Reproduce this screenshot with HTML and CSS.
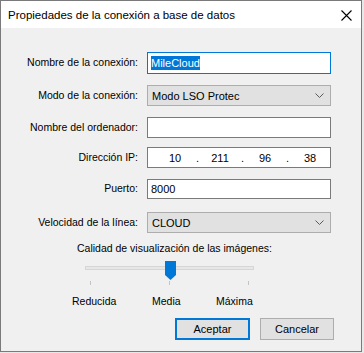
FILE: index.html
```html
<!DOCTYPE html>
<html lang="es">
<head>
    <meta charset="UTF-8">
    <meta name="viewport" content="width=device-width, initial-scale=1.0">
    <title>Propiedades de la conexión</title>
    <link rel="stylesheet" href="styles.css">
</head>
<body>
    <div class="dialog">
        <div class="titlebar">
            <span class="title">Propiedades de la conexión a base de datos</span>
            <svg class="close" width="11" height="11" viewBox="0 0 11 11">
                <path d="M0.5 0.5 L10.5 10.5 M10.5 0.5 L0.5 10.5" stroke="#000" stroke-width="1.1" fill="none"/>
            </svg>
        </div>

        <div class="content">
            <div class="form">
                <div class="row">
                    <label>Nombre de la conexión:</label>
                    <div class="field input focused"><span class="selected">MileCloud</span></div>
                </div>
                <div class="row">
                    <label>Modo de la conexión:</label>
                    <div class="field select">
                        <span>Modo LSO Protec</span>
                        <svg class="chevron" width="9" height="5" viewBox="0 0 9 5">
                            <path d="M0.5 0.5 L4.5 4.5 L8.5 0.5" stroke="#5a5a5a" fill="none"/>
                        </svg>
                    </div>
                </div>
                <div class="row">
                    <label>Nombre del ordenador:</label>
                    <div class="field input"></div>
                </div>
                <div class="row row-ip">
                    <label>Dirección IP:</label>
                    <div class="field input ip">
                        <span class="octet">10</span><span class="dot">.</span>
                        <span class="octet">211</span><span class="dot">.</span>
                        <span class="octet">96</span><span class="dot">.</span>
                        <span class="octet">38</span>
                    </div>
                </div>
                <div class="row row-port">
                    <label>Puerto:</label>
                    <div class="field input">8000</div>
                </div>
                <div class="row row-speed">
                    <label>Velocidad de la línea:</label>
                    <div class="field select">
                        <span>CLOUD</span>
                        <svg class="chevron" width="9" height="5" viewBox="0 0 9 5">
                            <path d="M0.5 0.5 L4.5 4.5 L8.5 0.5" stroke="#5a5a5a" fill="none"/>
                        </svg>
                    </div>
                </div>
            </div>

            <div class="quality-label">Calidad de visualización de las imágenes:</div>

            <div class="slider">
                <div class="track">
                    <svg class="thumb" width="11" height="19" viewBox="0 0 11 19">
                        <path d="M0 0 H11 V14 L5.5 19 L0 14 Z" fill="#0078d7"/>
                    </svg>
                </div>
                <div class="ticks">
                    <span class="tick"></span>
                    <span class="tick"></span>
                    <span class="tick"></span>
                </div>
            </div>

            <div class="slider-labels">
                <span>Reducida</span>
                <span>Media</span>
                <span>Máxima</span>
            </div>

            <div class="buttons">
                <a href="#" class="btn default">Aceptar</a>
                <a href="#" class="btn">Cancelar</a>
            </div>
        </div>
    </div>
</body>
</html>
```

FILE: styles.css
```css
* {
    box-sizing: border-box;
}

body {
    margin: 0;
    background-color: #e8e8e8;
    font-family: "Liberation Sans", Arial, sans-serif;
    font-size: 10.5px;
    color: black;
}

.dialog {
    width: 362px;
    height: 352px;
    border: 1px solid #7a7a7a;
    background-color: #f0f0f0;
    display: flex;
    flex-direction: column;
}

.titlebar {
    height: 27px;
    background-color: white;
    display: flex;
    align-items: center;
    justify-content: space-between;
    padding: 0 9px 0 7px;
}

.title {
    font-family: "Liberation Sans", Arial, sans-serif;
    font-size: 11.5px;
}

.close {
    margin-top: 1px;
}

.content {
    flex: 1;
    padding-top: 24px;
}

.form {
    display: flex;
    flex-direction: column;
    gap: 11px;
}

.row {
    display: flex;
    align-items: center;
    gap: 9px;
}

.row label {
    width: 137px;
    text-align: right;
    margin-bottom: 2px;
}

.row-ip {
    margin-top: -2px;
}

.row-speed {
    margin-top: 2px;
}

.field {
    width: 184px;
    height: 21px;
    display: flex;
    align-items: center;
    padding: 0 3px;
    font-size: 11px;
}

.input {
    background-color: white;
    border: 1px solid #7a7a7a;
}

.input.focused {
    height: 22px;
    border-color: #0078d7;
}

.row-port .field {
    height: 20px;
}

.selected {
    background-color: #0078d7;
    color: white;
    padding: 1px 0;
}

.select {
    background-color: #e1e1e1;
    border: 1px solid #adadad;
    justify-content: space-between;
    padding: 0 6px 0 4px;
}

.ip {
    padding-left: 12px;
}

.octet {
    width: 30px;
    text-align: center;
}

.dot {
    width: 15px;
    text-align: center;
}

.quality-label {
    margin-top: 9px;
    padding-left: 76px;
}

.slider {
    margin: 12px 0 0 84px;
    width: 169px;
}

.track {
    position: relative;
    height: 4px;
    background-color: #e7e7e7;
    border: 1px solid #d6d6d6;
}

.thumb {
    position: absolute;
    left: 79px;
    top: -6px;
}

.ticks {
    display: flex;
    justify-content: space-between;
    width: 159px;
    margin: 11px 0 0 5px;
}

.tick {
    width: 1px;
    height: 4px;
    background-color: #c4c4c4;
}

.slider-labels {
    display: grid;
    grid-template-columns: 80px 64px auto;
    margin-top: 10px;
    padding-left: 71px;
}

.buttons {
    display: flex;
    justify-content: flex-end;
    gap: 10px;
    margin-top: 11px;
    padding-right: 27px;
}

.btn {
    width: 74px;
    height: 22px;
    display: flex;
    align-items: center;
    justify-content: center;
    background-color: #e1e1e1;
    border: 1px solid #adadad;
    color: black;
    text-decoration: none;
    font-size: 11px;
}

.btn.default {
    width: 75px;
    border: 2px solid #0078d7;
}
```
